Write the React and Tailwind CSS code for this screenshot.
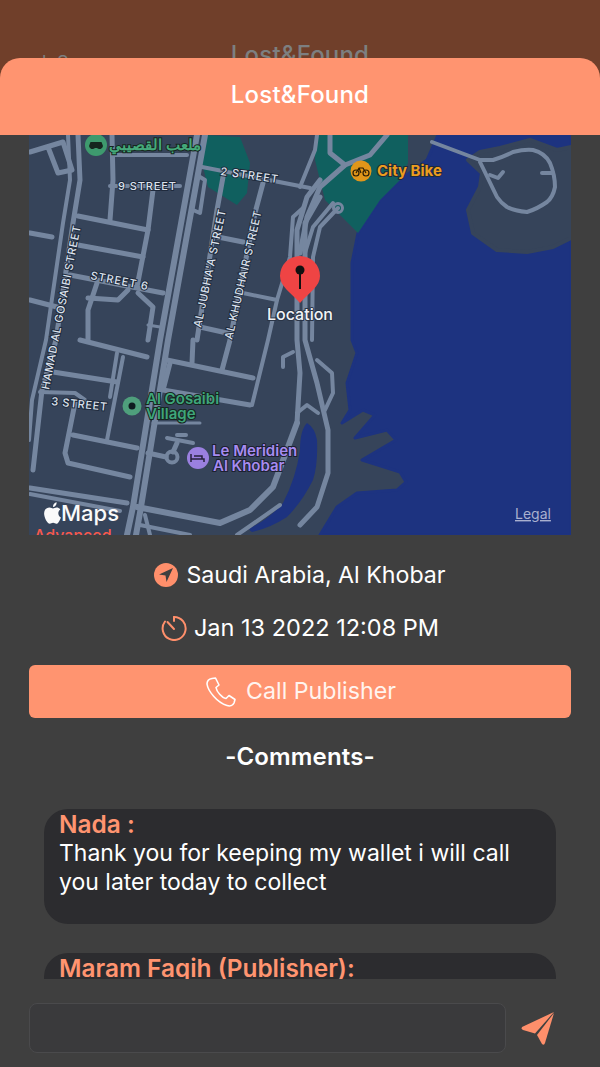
import React from "react";

const roads = [
  ["M197 135L160 340L133 507L127 535", 6],
  ["M205 135L168 340L141 507L136 535", 6],
  ["M68 135L70 180L63 223L46 340L32 400L29 440", 4],
  ["M78 135L80 180L73 223L56 340L42 390L33 470", 5],
  ["M30 152L63 142L72 170L58 173L48 147", 5],
  ["M112 135L113 180L110 220", 5],
  ["M115 155L187 155", 4],
  ["M110 186L180 186", 4],
  ["M153 190L148 230L137 287", 5],
  ["M78 216L148 230", 5],
  ["M78 245L143 257", 5],
  ["M30 233L52 237", 5],
  ["M70 275L163 293", 5],
  ["M30 300L57 307", 5],
  ["M97 283L88 310L88 340", 5],
  ["M88 298L118 300L128 290", 5],
  ["M138 293L153 307L148 340", 5],
  ["M148 325L160 327", 3],
  ["M80 340L147 357", 5],
  ["M53 372L117 382", 5],
  ["M123 357L107 440", 4],
  ["M117 353L110 397", 4],
  ["M40 392L75 393L85 400", 4],
  ["M75 403L65 453L68 463L130 477", 5],
  ["M73 435L137 448", 5],
  ["M148 453L166 457", 5],
  ["M177 443L173 452", 5],
  ["M167 438L193 443", 4],
  ["M177 435L186 435", 4],
  ["M153 423L200 423", 3],
  ["M30 488L127 503", 5],
  ["M30 494L120 511", 4],
  ["M202 167L310 188", 4],
  ["M223 177L217 210L197 340", 5],
  ["M263 183L255 213L230 340L222 370", 5],
  ["M218 237L243 242", 5],
  ["M243 293L277 300L268 340L252 405", 4],
  ["M277 300L290 257L293 217L303 208", 4],
  ["M200 327L227 333", 5],
  ["M200 177L205 180L200 213L193 210", 4],
  ["M193 340L192 363", 5],
  ["M167 360L253 378", 5],
  ["M170 363L163 390L250 405", 5],
  ["M317 135L315 150L300 187", 4],
  ["M330 135L330 153L345 165L320 187L307 217L300 253", 5],
  ["M387 135L370 155L345 165", 5],
  ["M320 180L307 197L297 230L297 340L300 373L297 423", 5],
  ["M320 197L305 223L305 340L317 383L328 430L328 473L317 507L300 525", 5],
  ["M338 208L320 227L313 257L312 340", 4],
  ["M333 203L313 227L305 253", 4],
  ["M317 360L332 373L333 393L325 410", 4],
  ["M297 413L307 405L318 413", 4],
  ["M283 367L283 357L293 352", 4],
  ["M137 507L220 523L250 510L273 487L297 423", 6],
  ["M237 535L250 526L280 505", 4],
  ["M140 525L190 535", 4],
  ["M145 515L150 535", 4],
];

function MapLabel({ x, y, fill = "#dbe1ec", size = 11, weight = 500, rotate, anchor = "start", spacing = 0.8, halo = "#1f2a3c", children }) {
  return (
    <text
      x={x}
      y={y}
      fill={fill}
      fontSize={size}
      fontWeight={weight}
      textAnchor={anchor}
      letterSpacing={spacing}
      stroke={halo}
      strokeWidth="2"
      paintOrder="stroke"
      fontFamily="Inter, 'Noto Sans', sans-serif"
      transform={rotate ? `rotate(${rotate} ${x} ${y})` : undefined}
    >
      {children}
    </text>
  );
}

function MapDrawing() {
  return (
    <svg viewBox="29 135 542 400" width="542" height="400" className="block">
      <rect x="29" y="135" width="542" height="400" fill="#36445a" />
      <path d="M438 135L427 160L400 180L380 200L358 233L352 263L352 340L357 353L347 383L350 410L342 423L363 410L375 415L355 438L387 430L396 440L362 460L400 472L406 482L397 490L357 493L337 507L320 535L571 535L571 135Z" fill="#1d3380" stroke="#1d3380" strokeWidth="3" strokeLinejoin="round" />
      <path d="M468 160L482 173L480 187L468 210L473 233L497 250L527 252L553 247L571 238L571 147L557 150L530 140L500 148L480 152Z" fill="#36445a" stroke="#36445a" strokeWidth="4" strokeLinejoin="round" />
      <rect x="571" y="135" width="6" height="400" fill="#3f3f3f" />
      <path d="M205 135L240 137L250 163L247 193L237 205L208 187L202 163Z" fill="#10605f" />
      <path d="M315 135L408 135L408 163L400 180L380 200L358 233L325 200L315 160Z" fill="#10605f" />
      <path d="M307 423Q315 428 317 440Q318 465 313 480Q302 502 287 517Q270 528 252 532Q248 530 250 528Q268 520 283 503Q296 478 300 450Q300 430 307 423Z" fill="#1d3380" />
      <g fill="none" stroke="#75869f" strokeLinecap="round" strokeLinejoin="round">
        {roads.map(([d, w], i) => (
          <path key={i} d={d} strokeWidth={w} />
        ))}
        <path d="M432 142L480 160L493 160Q503 157 513 152Q525 149 533 150Q545 153 550 163Q555 175 555 187Q553 197 547 202Q537 209 527 212Q515 211 507 207Q501 203 497 197L480 162" strokeWidth="4" />
        <path d="M490 175L498 178L503 172" strokeWidth="4" />
        <path d="M542 173L553 173" strokeWidth="4" />
        <circle cx="172" cy="457" r="5.5" strokeWidth="4" />
        <circle cx="338" cy="208" r="4.5" strokeWidth="3" />
      </g>

      <MapLabel x="118" y="190" spacing={0.9}>9 STREET</MapLabel>
      <MapLabel x="220" y="175" rotate={8} spacing={0.9}>2 STREET</MapLabel>
      <MapLabel x="90" y="279" rotate={11} spacing={0.9}>STREET 6</MapLabel>
      <MapLabel x="51" y="405" rotate={6} spacing={0.6}>3 STREET</MapLabel>
      <MapLabel x="49" y="390" rotate={-79} spacing={0.7}>HAMAD AL GOSAIBI STREET</MapLabel>
      <MapLabel x="201" y="328" rotate={-78} spacing={0.7}>AL JUBHA'A STREET</MapLabel>
      <MapLabel x="232" y="340" rotate={-77} spacing={0.7}>AL KHUDHAIR STREET</MapLabel>

      <circle cx="96" cy="145" r="11" fill="#3e9a6e" />
      <path d="M89 146a3.5 3.5 0 0 0 6 2h2a3.5 3.5 0 0 0 6-2l-1.500-4h-11Z" fill="#16261f" />
      <MapLabel x="201" y="150" anchor="end" fill="#45a97a" size={15} weight={700} spacing={0} halo="#16261f">ملعب القصيبي</MapLabel>

      <circle cx="361" cy="171" r="10.500" fill="#e0961a" />
      <g fill="none" stroke="#2a1d05" strokeWidth="1.200">
        <circle cx="356" cy="173" r="3" />
        <circle cx="366" cy="173" r="3" />
        <path d="M356 173l3-5h4l3 5M359 168l2 5" />
      </g>
      <MapLabel x="377" y="176" fill="#ec9d1f" size={15} weight={700} spacing={0} halo="#1f2a3c">City Bike</MapLabel>

      <circle cx="132" cy="406" r="9.500" fill="#4f9f7c" />
      <circle cx="132" cy="406" r="3.500" fill="#0f1c20" />
      <MapLabel x="146" y="404" fill="#3fa57b" size={15} weight={600} spacing={0} halo="#16261f">Al Gosaibi</MapLabel>
      <MapLabel x="146" y="419" fill="#3fa57b" size={15} weight={600} spacing={0} halo="#16261f">Village</MapLabel>

      <circle cx="198" cy="458" r="11" fill="#9a80e0" />
      <path d="M191 454v8M191 459h13v3M194 456h8v3" fill="none" stroke="#26203c" strokeWidth="1.500" />
      <MapLabel x="212" y="456" fill="#a78cf0" size={15} weight={600} spacing={0} halo="#1c2030">Le Meridien</MapLabel>
      <MapLabel x="213" y="471" fill="#a78cf0" size={15} weight={600} spacing={0} halo="#1c2030">Al Khobar</MapLabel>

      <path d="M300 256a20 20 0 0 1 20 20c0 10-10 16-20 27c-10-11-20-17-20-27a20 20 0 0 1 20-20Z" fill="#ef4444" />
      <circle cx="300" cy="270" r="4.500" fill="#111" />
      <rect x="299" y="272" width="2" height="17" fill="#111" />
      <MapLabel x="300" y="320" anchor="middle" fill="#f1f3f6" size={16} weight={500} spacing={0} halo="#2a3547">Location</MapLabel>

      <path d="M49.500 507.500c1.800 0 2.500 1 3.500 1c1.100 0 2.100-1.100 3.800-1c.9 0 2.500.4 3.500 2c-3 2.100-2.400 6.600.6 8c-.8 2.500-2.700 6.300-4.500 6.300c-1.300 0-1.800-1-3.300-1c-1.500 0-2.200 1-3.300 1c-2.500 0-5.700-6.200-5.700-10.300c0-3.700 2.300-6 5.400-6ZM53 507c-.2-2.400 1.600-4.500 3.600-4.800c.3 2.500-1.700 4.800-3.600 4.800Z" fill="#fafafa" />
      <text x="61" y="521" fill="#fafafa" fontSize="22" fontWeight="500" fontFamily="Inter, sans-serif">Maps</text>
      <text x="34" y="541" fill="#f8594a" fontSize="16" fontWeight="500" fontFamily="Inter, sans-serif">Advanced</text>
      <text x="515" y="519" fill="#a9b0cf" fontSize="14" textDecoration="underline" fontFamily="Inter, sans-serif">Legal</text>
    </svg>
  );
}

export default function App() {
  return (
    <div className="w-[600px] h-[1067px] overflow-hidden bg-[#703f2a] flex flex-col font-['Inter',sans-serif]">
      <div className="h-[58px] shrink-0 overflow-hidden relative">
        <div className="pt-[40px] text-center text-[24px] leading-[29px] font-medium tracking-[0.2px] text-[#7d7f80]">Lost&amp;Found</div>
        <div className="absolute left-[42px] top-[52px] text-[18px] leading-[22px] text-[#7d7f80]">k S</div>
      </div>
      <div className="h-[77px] shrink-0 bg-[#ff9470] rounded-t-[20px] flex items-center justify-center pb-[4px] text-white text-[24px] font-medium tracking-[0.2px]">
        Lost&amp;Found
      </div>
      <div className="flex-1 bg-[#3f3f3f] flex flex-col">
        <div className="px-[29px]">
          <MapDrawing />
        </div>
        <div className="mt-[25px] h-[30px] flex items-center justify-center gap-[8px] text-white text-[23.2px]">
          <svg width="24" height="24" viewBox="0 0 24 24">
            <circle cx="12" cy="12" r="12" fill="#ff8f6b" />
            <path d="M19 5L5 11.500L11.500 12.500L12.500 19Z" fill="#3f3f3f" />
          </svg>
          <span>Saudi Arabia, Al Khobar</span>
        </div>
        <div className="mt-[23px] h-[30px] flex items-center justify-center gap-[7px] text-white text-[23.5px]">
          <svg width="26" height="26" viewBox="0 0 26 26" fill="none" stroke="#ff8f6b" strokeWidth="2" strokeLinecap="round">
            <path d="M13 2a11.500 11.500 0 1 1-9 4.500" />
            <path d="M13 14L6.500 7" />
            <path d="M13 2v4" />
          </svg>
          <span>Jan 13 2022 12:08 PM</span>
        </div>
        <div className="mx-[29px] mt-[22px] h-[53px] shrink-0 rounded-[6px] bg-[#ff9470] flex items-center justify-center gap-[10px] text-white text-[23.2px]">
          <svg width="32" height="32" viewBox="0 0 32 32" fill="none" stroke="#fff" strokeWidth="1.600" strokeLinejoin="round">
            <path d="M8 2.500L11.500 2L15 9L12 11.500C12.500 15.500 18 22 22 22.500L25 19.500L31 23.500L30 27C29 29.500 26 30.500 23 29.500C13 26.500 4 15 3 8C3 5 5 3 8 2.500Z" />
          </svg>
          <span className="text-[#fff4ef]">Call Publisher</span>
        </div>
        <div className="mt-[24px] text-center text-white text-[24px] leading-[29px] font-semibold tracking-[0.15px]">-Comments-</div>
        <div className="mt-[38px] h-[170px] shrink-0 mx-[44px] overflow-hidden flex flex-col gap-[29px]">
          <div className="h-[115px] shrink-0 rounded-[24px] bg-[#2c2c2f] px-[15px] pt-[1px] text-[23px] leading-[29px]">
            <div className="font-semibold text-[24.400px] text-[#ff9470]">Nada :</div>
            <div className="text-white">Thank you for keeping my wallet i will call you later today to collect</div>
          </div>
          <div className="h-[115px] shrink-0 rounded-[24px] bg-[#2c2c2f] px-[15px] pt-[1px] text-[23px] leading-[29px]">
            <div className="font-semibold text-[24.400px] text-[#ff9470]">Maram Faqih (Publisher):</div>
          </div>
        </div>
        <div className="mt-[24px] px-[29px] flex items-center gap-[15px]">
          <div className="w-[477px] h-[50px] rounded-[8px] bg-[#3a3a3c] border border-[#4a4a4c]"></div>
          <svg width="34" height="34" viewBox="0 0 34 34">
            <path d="M33 1L1 16Q0 18 2 19L14 22.500Z" fill="#ff8f6b" />
            <path d="M33 2L16 24L21 33Q23 35 24 32Z" fill="#ff8f6b" />
          </svg>
        </div>
      </div>
    </div>
  );
}
